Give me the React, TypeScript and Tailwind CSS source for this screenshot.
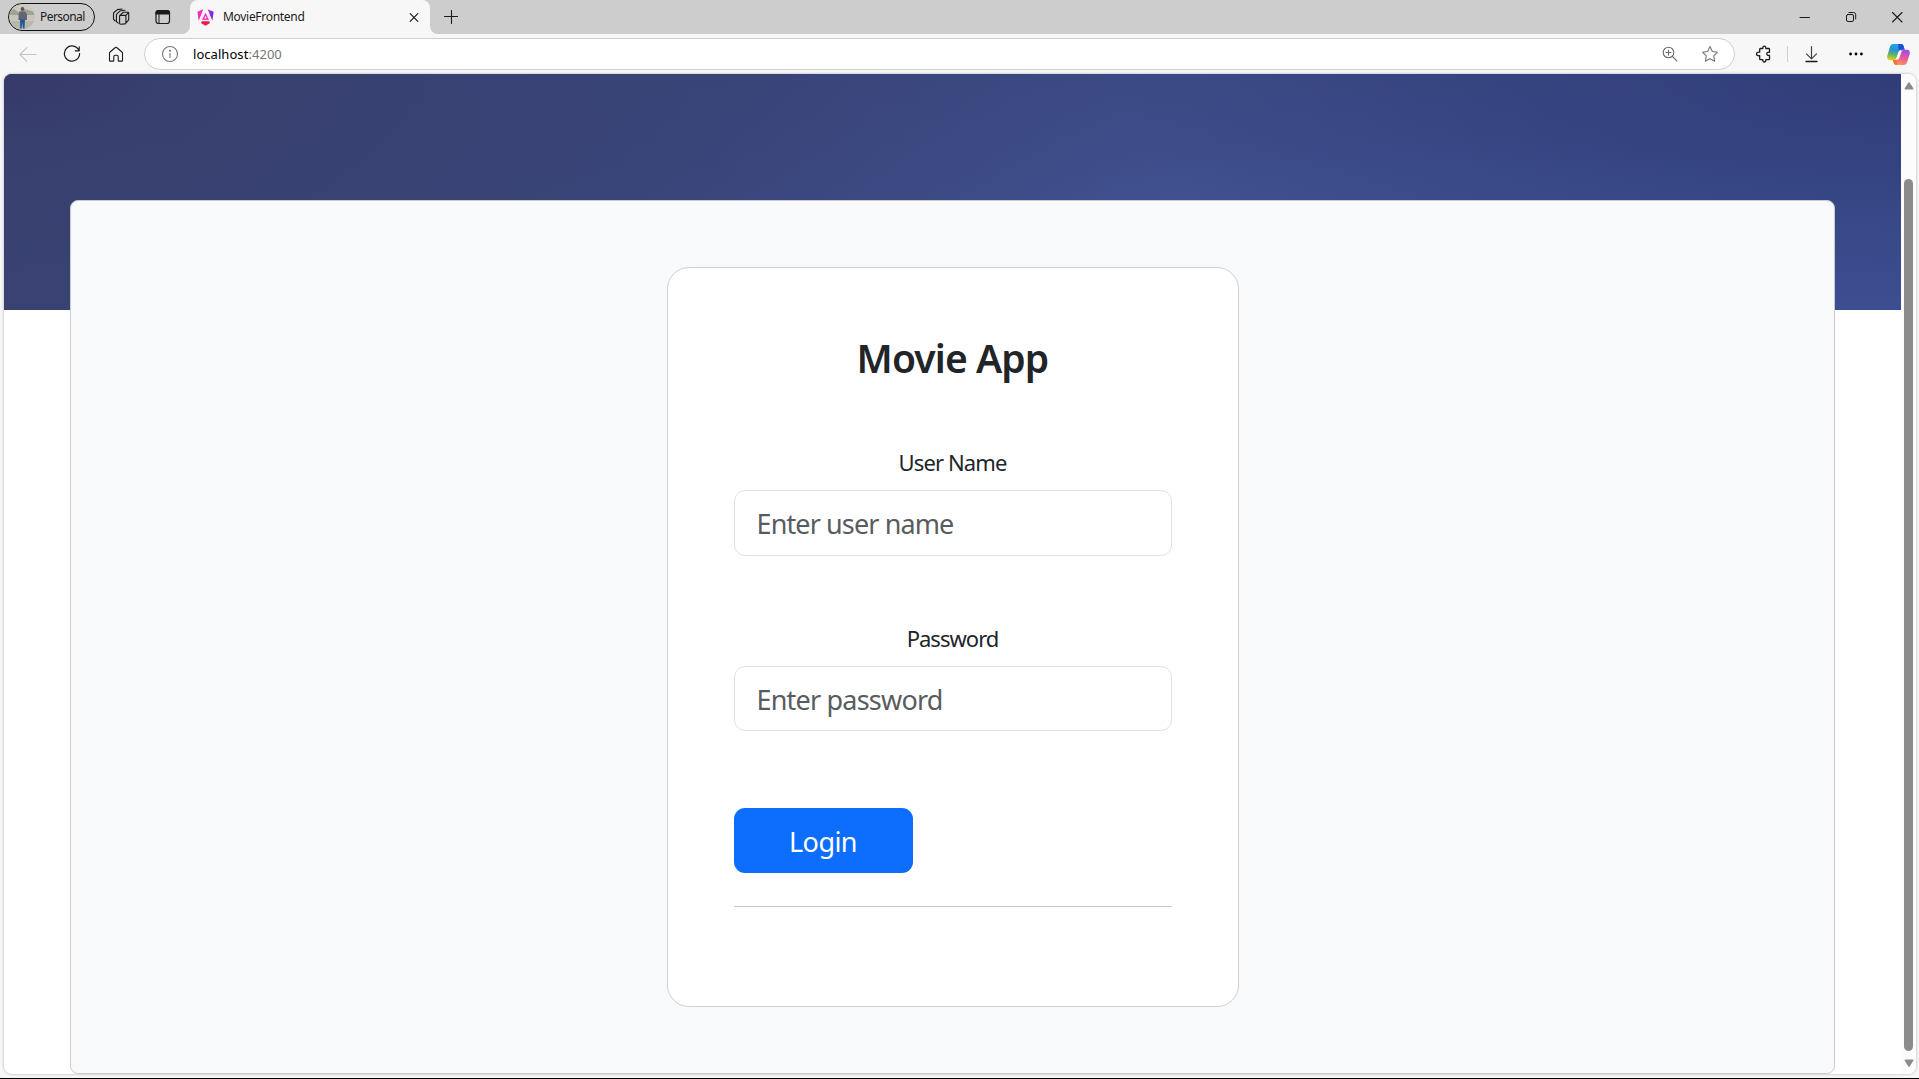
import type { ReactNode } from "react";

function Avatar() {
  return (
    <svg width="26" height="26" viewBox="0 0 26 26">
      <defs>
        <clipPath id="avatar-clip">
          <circle cx="13" cy="13" r="12.5" />
        </clipPath>
      </defs>
      <g clipPath="url(#avatar-clip)">
        <rect width="26" height="26" fill="#b9b6ae" />
        <rect width="26" height="9" fill="#c9cbc4" />
        <path d="M0 7l5-2 4 3 7-3 10 3v3H0z" fill="#a3a294" />
        <path d="M0 11h26v6H0z" fill="#cbc4ba" />
        <path d="M11 7.500h5l2 2.500v6h-8.500v-6z" fill="#5f6777" />
        <circle cx="13.500" cy="5" r="1.900" fill="#6c5447" />
        <path d="M11 15.500h5l-.5 9h-1.500l-.8-6-.5 6h-1.500z" fill="#24578f" />
      </g>
    </svg>
  );
}

function AngularMark() {
  return (
    <svg width="17" height="17" viewBox="0 0 17 17">
      <defs>
        <linearGradient id="ng-left" x1="0" y1="0" x2="0.6" y2="1">
          <stop offset="0" stopColor="#f23be6" />
          <stop offset="1" stopColor="#f01aa8" />
        </linearGradient>
        <linearGradient id="ng-right" x1="0" y1="0" x2="1" y2="0.3">
          <stop offset="0" stopColor="#c435f5" />
          <stop offset="1" stopColor="#6d1bea" />
        </linearGradient>
        <linearGradient id="ng-mid" x1="0" y1="0" x2="0" y2="1">
          <stop offset="0" stopColor="#ef35e2" />
          <stop offset="1" stopColor="#f0419f" />
        </linearGradient>
      </defs>
      <path d="M0.400 2.700L6.300 0.200L1.700 11.800z" fill="url(#ng-left)" />
      <path d="M10.700 0.200L16.600 2.700L15.300 11.800z" fill="url(#ng-right)" />
      <path d="M8.500 3.400L12 11H5zM8.500 7L7.300 9.600h2.400z" fillRule="evenodd" fill="url(#ng-mid)" />
      <path d="M4.800 12.300h7.400l.8 1.800-4.500 2.600L4 14.100z" fill="#ed1748" />
    </svg>
  );
}

function CopilotMark() {
  return (
    <svg width="23" height="21" viewBox="0 0 23 21">
      <defs>
        <linearGradient id="cp-left" x1="0.4" y1="0" x2="0.2" y2="1">
          <stop offset="0" stopColor="#1fa6ea" />
          <stop offset="0.35" stopColor="#2b8fd8" />
          <stop offset="0.65" stopColor="#5eb75c" />
          <stop offset="1" stopColor="#f2cd22" />
        </linearGradient>
        <linearGradient id="cp-right" x1="0.6" y1="0" x2="0.3" y2="1">
          <stop offset="0" stopColor="#a24bea" />
          <stop offset="0.5" stopColor="#ea5a98" />
          <stop offset="1" stopColor="#fb9a55" />
        </linearGradient>
      </defs>
      <path d="M6 0h8c2 0 2.500 1.500 3 3.400l.7 2.300h-3.300c-2 0-2.700 1.300-3.300 3.200L9.500 14c-.5 1.700-1.300 2.200-3 2.200H3c-2.500 0-3.300-2-2.600-4.600l2.500-8.700C3.500 1 4.500 0 6 0z" fill="url(#cp-left)" />
      <path d="M11 0h3c2 0 2.500 1.500 3 3.400l.7 2.300h-3.300c-1.200 0-2 .5-2.500 1.400z" fill="#1c50cf" />
      <path d="M17 21H9.500c-2 0-2.600-1.400-3.100-3.200l-.6-1.900h2.400c2 0 2.700-1.200 3.300-3.100l1.600-5c.5-1.600 1.300-2.100 2.900-2.100h4c2.500 0 3.300 2 2.600 4.500l-2.500 8C19.500 20 18.500 21 17 21z" fill="url(#cp-right)" />
      <path d="M6.400 17.800l-.6-1.900h2.400c1.100 0 1.900-.4 2.400-1.300L10 21h-.5c-2 0-2.600-1.400-3.100-3.200z" fill="#f1782f" />
      <path d="M12.300 6.800h4.200c-1.500 0-2 .7-2.500 2.200l-1.500 4.500c-.4 1-.9 1.600-1.700 1.900H8c1 0 1.600-.8 2-2.200z" fill="#fff" />
    </svg>
  );
}

function Line({ size = 18, color = "#1b1b1b", width = 1.1, children }: { size?: number; color?: string; width?: number; children: ReactNode }) {
  return (
    <svg width={size} height={size} viewBox={`0 0 ${size} ${size}`} fill="none" stroke={color} strokeWidth={width} strokeLinecap="round" strokeLinejoin="round">
      {children}
    </svg>
  );
}

function TabStrip() {
  return (
    <div className="flex h-[34px] shrink-0 items-center bg-[#cdcdcd] pl-2">
      <div className="flex h-7 w-[87px] shrink-0 items-center rounded-full border border-[#111] text-xs text-[#1b1b1b]">
        <Avatar />
        <span className="ml-[5px] tracking-[-0.55px]">Personal</span>
      </div>
      <div className="ml-[17px]">
        <Line>
          <path d="M7.600 7.600l3.400-3.100M7.600 8.300v7c0 .6.300.9.900.9l4.600-.3c.5 0 .8-.3.800-.8V8.200c0-.5-.3-.8-.8-.8H8.500c-.6 0-.9.300-.9.900zM11 4.300h4.900c.5 0 .8.300.8.800v6.700l-2.700 3M13.700 7.600l2.800-2.900" />
          <path d="M6.200 15.200l-1.400-1.400c-.3-.3-.4-.6-.4-1V7c0-.5.200-.8.500-1.100l3.300-3.100 4.800-.5M3.200 13l-1.300-1.300c-.3-.3-.4-.6-.4-1V5.600c0-.5.200-.8.500-1.100L5.300 1.600l4.800-.6" />
        </Line>
      </div>
      <div className="ml-6">
        <Line width={1.2}>
          <rect x="2" y="2.500" width="13.500" height="13" rx="2.500" />
          <path d="M2 6V5a2.500 2.500 0 0 1 2.500-2.500H13A2.500 2.500 0 0 1 15.500 5v1z" fill="#1b1b1b" />
          <path d="M5 6.500v9" strokeWidth="1" />
        </Line>
      </div>
      <div className="ml-2.5 h-2 w-2 self-end bg-[#f7f7f7]">
        <div className="size-2 rounded-br-lg bg-[#cdcdcd]" />
      </div>
      <div className="flex h-[34px] w-60 items-center rounded-t-lg bg-[#f7f7f7] pr-[9px] pl-[7px] text-xs text-[#1b1b1b]">
        <AngularMark />
        <span className="ml-[9px] flex-1 tracking-[-0.3px]">MovieFrontend</span>
        <Line size={14} width={1.2}>
          <path d="M3.200 3.700l7.600 7.600M10.800 3.700L3.200 11.300" />
        </Line>
      </div>
      <div className="h-2 w-2 self-end bg-[#f7f7f7]">
        <div className="size-2 rounded-bl-lg bg-[#cdcdcd]" />
      </div>
      <div className="ml-1.5">
        <Line size={14}>
          <path d="M7.500 0.500v13M0.500 6.500h13.500" />
        </Line>
      </div>
      <div className="ml-auto flex items-center gap-[34px] pr-4">
        <Line size={12} width={1}>
          <path d="M1 6.500h9.500" />
        </Line>
        <Line size={12} width={1}>
          <rect x="1.500" y="3.500" width="7" height="7" rx="1.500" />
          <path d="M4 1.500h4.500a2.200 2.200 0 0 1 2.200 2.200V8" />
        </Line>
        <Line size={12}>
          <path d="M1.500 1.500l9.500 9.500M11 1.500L1.500 11" />
        </Line>
      </div>
    </div>
  );
}

function Toolbar() {
  return (
    <div className="flex h-10 shrink-0 items-center bg-[#f7f7f7] pl-[19px]">
      <Line color="#c4c4c4">
        <path d="M1 9.500h16M7.800 2.700L1 9.500l6.800 6.800" />
      </Line>
      <div className="ml-[26px]">
        <Line width={1.2}>
          <path d="M16.200 1.800v4h-4M16 5.600A7.600 7.600 0 1 0 16.600 8.500" />
        </Line>
      </div>
      <div className="ml-[26px]">
        <Line width={1.1}>
          <path d="M2.500 8.200c0-.5.200-.9.600-1.200L8.300 2.500c.4-.4 1-.4 1.400 0L14.900 7c.4.300.6.7.6 1.200v7.200c0 .4-.3.700-.7.700h-2.900c-.4 0-.7-.3-.7-.7v-3.600c0-.9-.6-1.500-1.400-1.500H8.200c-.8 0-1.400.6-1.400 1.500v3.600c0 .4-.3.700-.7.700H3.200c-.4 0-.7-.3-.7-.7z" />
        </Line>
      </div>
      <div className="ml-[19px] flex h-8 w-[1591px] shrink-0 items-center rounded-full border border-[#cfd0d4] bg-white pr-[15px] pl-4">
        <Line color="#767676">
          <circle cx="9" cy="9" r="7.500" />
          <path d="M9 8.500v4" />
          <circle cx="9" cy="5.800" r="0.500" fill="#767676" />
        </Line>
        <span className="ml-3.5 flex-1 pt-px text-[13px] tracking-[0.05px] text-black">
          localhost<span className="text-[#767676]">:4200</span>
        </span>
        <Line size={16} color="#6b6b6b">
          <circle cx="6.500" cy="6.500" r="5.300" />
          <path d="M10.500 10.500l4.300 4.300M6.500 4v5M4 6.500h5" />
        </Line>
        <div className="ml-[23px]">
          <Line color="#767676">
            <path d="M9 1.600l2.300 4.900 5.200.7-3.800 3.700.9 5.300L9 13.700l-4.600 2.500.9-5.300L1.500 7.200l5.200-.7z" />
          </Line>
        </div>
      </div>
      <div className="ml-5">
        <Line width={1.3}>
          <path d="M5.500 3.500h2.300c-.2-1.500.5-2.300 1.500-2.300s1.700.8 1.500 2.300h2.900c.5 0 .8.300.8.800v3c-1.700-.3-2.800.3-2.800 1.500s1.100 1.900 2.800 1.600v3.500c0 .5-.3.800-.8.800h-2.900c.2 1.500-.5 2.300-1.500 2.300s-1.700-.8-1.500-2.300H5.500c-.5 0-.8-.3-.8-.8v-3.200c-1.900.3-3.200-.5-3.200-1.800s1.300-2 3.200-1.700V4.300c0-.5.300-.8.800-.8z" />
        </Line>
      </div>
      <div className="ml-[14px] h-4 w-px bg-[#cfcfcf]" />
      <div className="ml-[14px]">
        <Line>
          <path d="M9.500 1.500v12M4.500 8.800l5 5 5-5" strokeWidth="1.2" stroke="#444" />
          <path d="M4 16.500h11" strokeWidth="1.300" />
        </Line>
      </div>
      <svg className="ml-[29px]" width="14" height="4" viewBox="0 0 14 4">
        <circle cx="1.600" cy="2" r="1.400" />
        <circle cx="7" cy="2" r="1.400" />
        <circle cx="12.400" cy="2" r="1.400" />
      </svg>
      <div className="ml-6">
        <CopilotMark />
      </div>
    </div>
  );
}

function Scrollbar() {
  return (
    <div className="flex w-[15px] shrink-0 flex-col items-center bg-[#fcfcfc] pt-2 pb-[7px]">
      <svg width="10" height="8" viewBox="0 0 10 8">
        <path d="M4.200.8a1 1 0 0 1 1.600 0l3.500 5.500c.3.700 0 1.200-.7 1.200H1.400C.7 7.500.4 7 .7 6.300z" fill="#8b8b8b" />
      </svg>
      <div className="mt-[89px] h-[872px] w-[9px] rounded-full bg-[#8b8b8b]" />
      <svg className="mt-2" width="10" height="8" viewBox="0 0 10 8">
        <path d="M4.200 7.200a1 1 0 0 0 1.600 0l3.500-5.500C9.600 1 9.300.5 8.600.5H1.400C.7.500.4 1 .7 1.700z" fill="#8b8b8b" />
      </svg>
    </div>
  );
}

const inputClass =
  "mt-2.5 w-full rounded-[11px] border border-[#dee2e6] bg-white px-[22px] pt-px text-[27px] text-[#212529] outline-none placeholder:text-[#595c5f]";
const labelClass = "h-[35px] text-center text-[22px] leading-[35px] text-[#212529]";

function LoginCard() {
  return (
    <form className="h-[740px] w-[572px] rounded-[22px] border border-[#cfd0d2] bg-white px-[66px] pt-[66px]">
      <h1 className="h-[47px] text-center text-[39px] leading-[48px] font-semibold tracking-[-0.9px] text-[#212529]">Movie App</h1>
      <div className="mt-16 flex flex-col">
        <label className={`${labelClass} tracking-[-0.88px]`}>User Name</label>
        <input className={`${inputClass} h-[66px] tracking-[-0.88px]`} placeholder="Enter user name" />
      </div>
      <div className="mt-[65px] flex flex-col">
        <label className={`${labelClass} tracking-[-0.97px]`}>Password</label>
        <input className={`${inputClass} h-[65px] tracking-[-0.8px]`} type="password" placeholder="Enter password" />
      </div>
      <button type="button" className="mt-[77px] block h-[65px] w-[179px] rounded-[11px] bg-[#0d6efd] pt-px text-[27px] leading-none tracking-[-0.55px] text-white">
        Login
      </button>
      <div className="mt-[33px] h-px bg-[#c7c8c9]" />
    </form>
  );
}

export default function App() {
  return (
    <div className="flex h-[1079px] w-[1919px] flex-col overflow-hidden border-b border-black bg-[#f7f7f7] font-['Noto_Sans','Open_Sans',sans-serif]">
      <TabStrip />
      <Toolbar />
      <div className="ml-1 flex h-[1000px] w-[1912px] shrink-0 overflow-hidden rounded-lg bg-white shadow-[0_0_3px_rgba(0,0,0,0.3)]">
        <div className="h-full flex-1 bg-[radial-gradient(ellipse_42%_115%_at_100%_0%,#303d79_0%,rgba(48,61,121,0)_100%),radial-gradient(ellipse_60%_200%_at_0%_0%,#37396a_0%,#37406e_15%,rgba(55,65,112,0)_100%),linear-gradient(180deg,rgba(56,68,124,0.55)_0%,rgba(56,68,124,0)_60%),linear-gradient(100deg,#3a4478_0%,#3c4984_35%,#415190_62%,#3e5195_100%)] bg-[length:100%_236px] bg-no-repeat px-[66px] pt-[126px]">
          <main className="flex h-[874px] justify-center rounded-lg border border-[#c9cbce] bg-[#f8f9fb] pt-[66px]">
            <LoginCard />
          </main>
        </div>
        <Scrollbar />
      </div>
    </div>
  );
}
